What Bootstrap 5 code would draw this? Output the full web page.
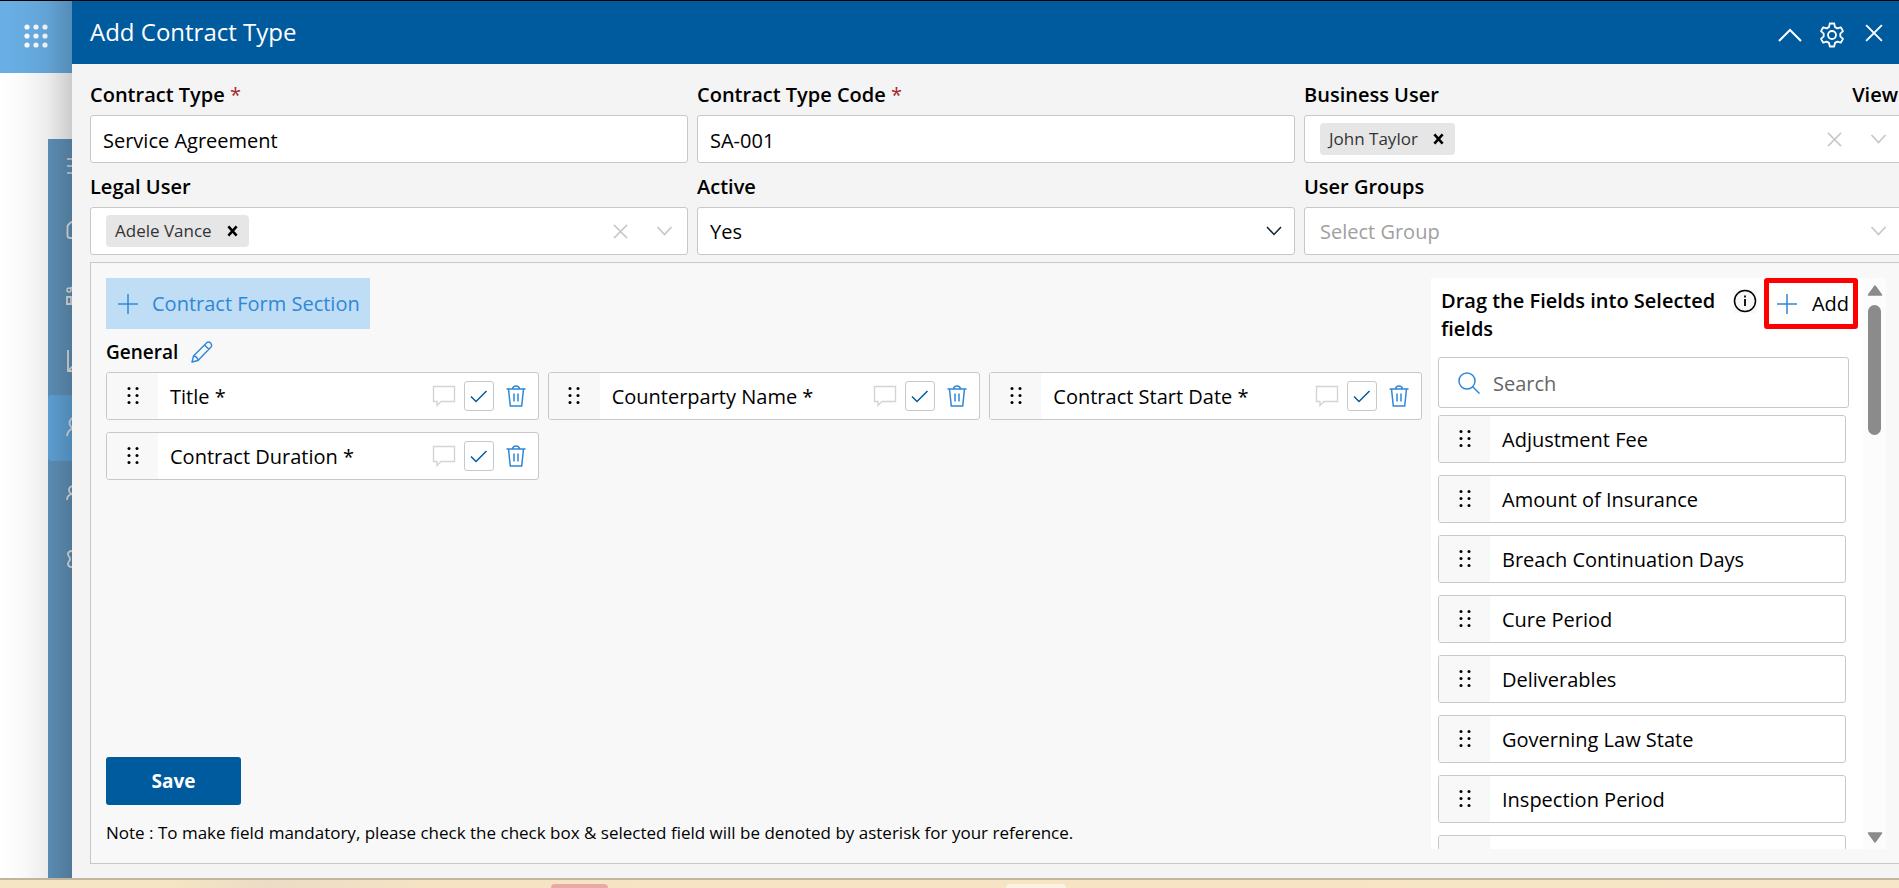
<!DOCTYPE html>
<html lang="en">
<head>
<meta charset="utf-8">
<meta name="viewport" content="width=device-width, initial-scale=1">
<title>Add Contract Type</title>
<link href="https://cdn.jsdelivr.net/npm/bootstrap@5.3.0/dist/css/bootstrap.min.css" rel="stylesheet">
<style>
  :root { --brand: #005a9e; --line: #c8c8c8; --accent: #2f87d8; }
  body { font-family: "Open Sans", "Noto Sans", sans-serif; font-size: 20px; line-height: 28px; color: #000; background: #fff; }
  svg { display: block; flex: none; fill: none; stroke: currentColor; }
  .screen { height: 100vh; min-height: 640px; border-top: 1px solid #000; overflow: hidden; }
  .shrinkable { min-width: 0; min-height: 0; }
  .rail { width: 72px; position: relative; overflow: hidden; }
  .rail::after { content: ""; position: absolute; inset: 0; background: linear-gradient(to right, rgba(0,0,0,0) 0, rgba(0,0,0,.02) 30%, rgba(0,0,0,.07) 65%, rgba(0,0,0,.2) 100%); pointer-events: none; }
  .launcher { height: 72px; background: #69afe5; color: #fff; border: 0; padding: 0 0 2px 24px; }
  .side-menu { width: 24px; margin-top: 66px; background: #6397c0; color: #ececec; overflow: hidden; }
  .side-menu a { display: flex; align-items: center; height: 66px; padding: 0 0 2px 18px; color: inherit; }
  .side-menu a.first { height: 58px; padding-bottom: 4px; }
  .side-menu a.current { background: #63aae2; border-radius: 4px 0 0 4px; }
  .panel-head { height: 63px; background: var(--brand); color: #fff; padding: 0 16px 0 18px; }
  .panel-head h1 { font-size: 24px; line-height: 32px; font-weight: 400; padding-bottom: 2px; }
  .icon-btn { background: none; border: 0; padding: 0; color: inherit; }
  .panel-body { background: #f4f4f4; padding: 17px 0 14px 18px; }
  .form-grid { display: grid; grid-template-columns: repeat(3, minmax(0, 1fr)); column-gap: 9px; row-gap: 10px; margin-right: -3px; }
  .form-grid label, .lbl { font-weight: 600; line-height: 28px; margin-bottom: 6px; display: block; white-space: nowrap; }
  .req { color: #a4262c; font-weight: 400; }
  .box { height: 48px; background-color: #fff; border: 1px solid var(--line); border-radius: 3px; color: #000; padding: 2px 12px 0; }
  select.box { appearance: none; background-image: url("data:image/svg+xml,%3Csvg xmlns='http://www.w3.org/2000/svg' viewBox='0 0 16 10'%3E%3Cpath d='M1 1l7 7.5L15 1' fill='none' stroke='%23123' stroke-width='1.5'/%3E%3C/svg%3E"); background-repeat: no-repeat; background-size: 16px 10px; background-position: right 12px center; }
  .picker { display: flex; align-items: center; padding: 0 14px 0 15px; color: #c8c8c8; }
  .picker input { border: 0; outline: 0; flex: 1; min-width: 0; background: none; padding: 2px 0 0; }
  .picker input::placeholder { color: #a0a0a0; opacity: 1; }
  .picked { background: #e6e6e6; color: #333; border-radius: 4px; height: 32px; padding: 0 11px 0 9px; font-size: 17px; gap: 15px; }
  .designer { background: #f8f8f8; border: 1px solid var(--line); border-right: 0; margin-top: 7px; padding: 15px 13px 14px 15px; gap: 9px; }
  .add-section { width: 264px; height: 51px; background: #bfddf5; color: var(--accent); border: 0; padding: 0 12px; gap: 14px; white-space: nowrap; }
  .section-bar { gap: 13px; margin: 9px 0 6px; }
  .section-name { font-size: 19px; line-height: 28px; font-weight: 600; margin: 0; }
  .pool-title { font-size: 20px; line-height: 28px; font-weight: 600; margin: 0; }
  .fields { display: grid; grid-template-columns: repeat(3, minmax(0, 1fr)); gap: 12px 9px; }
  .field { display: flex; align-items: center; height: 48px; flex: none; background: #fff; border: 1px solid var(--line); border-radius: 3px; overflow: hidden; white-space: nowrap; }
  .field label, .field-name { padding-top: 2px; }
  .grip { align-self: stretch; width: 51px; background: #f8f8f8; display: flex; align-items: center; justify-content: center; flex: none; margin-right: 12px; }
  .tools { gap: 8px; padding-right: 12px; color: var(--accent); }
  .tools .talk { color: #d4d4d4; }
  .tick { appearance: none; width: 30px; height: 30px; margin: 0 4px 0 0; border: 1px solid var(--line); border-radius: 3px; background: #fff; }
  .tick:checked { background: #fff url("data:image/svg+xml,%3Csvg xmlns='http://www.w3.org/2000/svg' viewBox='0 0 28 28'%3E%3Cpath d='M6 14.5l5 5L21.500 9' fill='none' stroke='%23005a9e' stroke-width='1.500'/%3E%3C/svg%3E") center/28px no-repeat; }
  .save { width: 135px; height: 48px; background: var(--brand); color: #fff; border: 0; border-radius: 3px; font-weight: 700; font-size: 19px; }
  .note { font-size: 17px; line-height: 24px; }
  .pool { width: 455px; }
  .pool-main { background: #fff; padding: 9px 14px 0 7px; overflow: hidden; }
  .pool-head { padding-left: 3px; margin-bottom: 14px; }
  .info { background: #f8f8f8; margin: 2px 7px 0 auto; }
  .add-btn { width: 94px; height: 51px; margin: -9px -9px 0 0; border: 5px solid #f00; border-radius: 3px; background: #fff; padding: 0 4px 0 8px; flex: none; }
  .search-box { display: flex; align-items: center; flex: none; height: 51px; padding: 0 20px 0 19px; gap: 13px; color: var(--accent); }
  .search-box input { border: 0; outline: 0; flex: 1; min-width: 0; padding: 2px 0 0; }
  .search-box input::placeholder { color: #666; opacity: 1; }
  .pool-list { display: flex; flex-direction: column; gap: 12px; margin: 7px 3px 0 0; padding: 0; list-style: none; }
  .scroll { width: 23px; background: #fcfcfc; padding: 7px 0 6px; color: #8b8b8b; }
  .thumb { width: 13px; height: 130px; border-radius: 7px; background: #8b8b8b; margin-top: 9px; }
  .desk { height: 10px; flex: none; border-top: 2px solid #c2b59c; background: linear-gradient(to right, #f5e5c4 0, #f5e5c4 9%, #ecdcc6 14%, #f5e3c4 22%, #f6e4c4 45%, #f7e6c7 100%); position: relative; }
  .desk span { position: absolute; bottom: 0; height: 4px; border-radius: 4px 4px 0 0; }
  .desk .red-tile { left: 29%; width: 57px; background: #e8aaa6; }
  .desk .pale-tile { left: 53%; width: 60px; background: #faf3e4; }
</style>
</head>
<body>
<svg width="0" height="0" class="position-absolute" aria-hidden="true">
  <symbol id="dots6" viewBox="0 0 14 18"><g fill="currentColor" stroke="none"><circle cx="3" cy="1.500" r="1.500"/><circle cx="11" cy="1.500" r="1.500"/><circle cx="3" cy="8.500" r="1.500"/><circle cx="11" cy="8.500" r="1.500"/><circle cx="3" cy="15.500" r="1.500"/><circle cx="11" cy="15.500" r="1.500"/></g></symbol>
  <symbol id="chat" viewBox="0 0 24 22"><path d="M1.500 1.500h21v15H9l-4 4v-4H1.500z" stroke-width="1.400"/></symbol>
  <symbol id="bin" viewBox="0 0 20 22"><path d="M.5 4h19M2.500 4l1.800 17h11.400l1.800-17M6.500 4C7 0 13 0 13.500 4M8 8.500v8M12 8.500v8" stroke-width="1.500"/></symbol>
  <symbol id="plus" viewBox="0 0 20 20"><path d="M10 0v20M0 10h20" stroke-width="1.500"/></symbol>
  <symbol id="cross" viewBox="0 0 16 16"><path d="M1 1l14 14M15 1L1 15" stroke-width="1.700"/></symbol>
  <symbol id="boldx" viewBox="0 0 12 12"><path d="M1.500 1l9 10M10.500 1l-9 10" stroke-width="2.800"/></symbol>
  <symbol id="down" viewBox="0 0 16 10"><path d="M1 1l7 7.500L15 1" stroke-width="1.800"/></symbol>
</svg>
<div class="screen d-flex flex-column">
  <div class="d-flex flex-grow-1 shrinkable">
    <aside class="rail d-flex flex-column flex-shrink-0">
      <button class="launcher" type="button" aria-label="App launcher">
        <svg width="24" height="24" viewBox="0 0 24 24"><g fill="currentColor" stroke="none"><circle cx="3" cy="3" r="2.600"/><circle cx="12" cy="3" r="2.600"/><circle cx="21" cy="3" r="2.600"/><circle cx="3" cy="12" r="2.600"/><circle cx="12" cy="12" r="2.600"/><circle cx="21" cy="12" r="2.600"/><circle cx="3" cy="21" r="2.600"/><circle cx="12" cy="21" r="2.600"/><circle cx="21" cy="21" r="2.600"/></g></svg>
      </button>
      <nav class="side-menu flex-grow-1 ms-auto" aria-label="Main">
        <a href="#" class="first" aria-label="Menu"><svg width="22" height="18" viewBox="0 0 22 18"><path d="M1 2h20M1 9h20M1 16h20" stroke-width="1.500"/></svg></a>
        <a href="#" aria-label="Home"><svg width="22" height="20" viewBox="0 0 22 20"><path d="M8 19H4q-2.500 0-2.500-2.500V8Q1.500 6 4 4l7-4" stroke-width="1.800"/></svg></a>
        <a href="#" aria-label="Dashboard"><svg width="22" height="22" viewBox="0 0 22 22"><path d="M1 13h4v7H1zM4 5l5-4M9 10h4v10H9z" stroke-width="1.800"/><circle cx="3" cy="6" r="2" stroke-width="1.500"/></svg></a>
        <a href="#" aria-label="Reports"><svg width="22" height="22" viewBox="0 0 22 22"><path d="M2 0v21h20M2 21l8-8" stroke-width="1.800"/></svg></a>
        <a href="#" class="current" aria-label="Contract types"><svg width="22" height="22" viewBox="0 0 22 22"><circle cx="9" cy="7" r="5.500" stroke-width="1.800"/><path d="M1 20q1-7 7-7.500" stroke-width="1.800"/></svg></a>
        <a href="#" aria-label="Users"><svg width="22" height="18" viewBox="0 0 22 18"><circle cx="7" cy="6" r="4" stroke-width="1.800"/><path d="M1 16q0-5.500 6-6" stroke-width="1.800"/></svg></a>
        <a href="#" aria-label="Settings"><svg width="20" height="20" viewBox="0 0 20 20"><path d="M8 3Q5 1 3 3 1 5 3 7.500q2 2.500 0 5Q1 15 3 17q2 2 5 0" stroke-width="1.800"/></svg></a>
      </nav>
    </aside>

    <main class="d-flex flex-column flex-grow-1 shrinkable">
      <header class="panel-head d-flex align-items-center flex-shrink-0">
        <h1 class="mb-0 me-auto">Add Contract Type</h1>
        <div class="d-flex align-items-center gap-3 me-3 pt-1">
          <button class="icon-btn" type="button" aria-label="Collapse"><svg width="26" height="14" viewBox="0 0 26 14"><path d="M2 13L13 2l11 11" stroke-width="2"/></svg></button>
          <button class="icon-btn" type="button" aria-label="Settings"><svg width="26" height="26" viewBox="0 0 26 26" stroke-width="1.800"><circle cx="13" cy="13" r="4"/><path d="M10.800 1.500h4.400l.8 3.600 2.300 1.300 3.500-1.100 2.200 3.800-2.700 2.500v2.800l2.700 2.500-2.200 3.800-3.500-1.100-2.300 1.300-.8 3.600h-4.400l-.8-3.600-2.300-1.300-3.500 1.100L2 16.900l2.700-2.500v-2.800L2 9.100l2.200-3.800 3.500 1.100L10 5.100z" stroke-linejoin="round"/></svg></button>
        </div>
        <button class="icon-btn ms-1" type="button" aria-label="Close"><svg width="18" height="18"><use href="#cross"/></svg></button>
      </header>

      <div class="panel-body d-flex flex-column flex-grow-1 overflow-hidden">
        <div class="form-grid">
          <div><label for="ctype">Contract Type <span class="req">*</span></label><input id="ctype" class="box w-100" value="Service Agreement"></div>
          <div><label for="ccode">Contract Type Code <span class="req">*</span></label><input id="ccode" class="box w-100" value="SA-001"></div>
          <div>
            <div class="d-flex justify-content-between"><label for="buser">Business User</label><span class="lbl me-1">View</span></div>
            <div class="box picker"><span class="picked d-flex align-items-center">John Taylor<button class="icon-btn text-black" type="button" aria-label="Remove John Taylor"><svg width="11" height="12"><use href="#boldx"/></svg></button></span><input id="buser"><svg width="15" height="15" class="me-4"><use href="#cross"/></svg><svg width="17" height="10" class="ms-1"><use href="#down"/></svg></div>
          </div>
          <div>
            <label for="luser">Legal User</label>
            <div class="box picker"><span class="picked d-flex align-items-center">Adele Vance<button class="icon-btn text-black" type="button" aria-label="Remove Adele Vance"><svg width="11" height="12"><use href="#boldx"/></svg></button></span><input id="luser"><svg width="15" height="15" class="me-4"><use href="#cross"/></svg><svg width="17" height="10" class="ms-1"><use href="#down"/></svg></div>
          </div>
          <div><label for="active">Active</label><select id="active" class="box w-100"><option>Yes</option><option>No</option></select></div>
          <div><label for="groups">User Groups</label><div class="box picker"><input id="groups" placeholder="Select Group"><svg width="17" height="10"><use href="#down"/></svg></div></div>
        </div>

        <section class="designer d-flex flex-grow-1 shrinkable">
          <div class="d-flex flex-column flex-grow-1 shrinkable pb-1">
            <button class="add-section d-flex align-items-center" type="button"><svg width="20" height="20"><use href="#plus"/></svg>Contract Form Section</button>
            <div class="section-bar d-flex align-items-center">
              <h2 class="section-name">General</h2>
              <button class="icon-btn" type="button" aria-label="Rename section"><svg width="22" height="22" viewBox="0 0 22 22" color="#2f87d8"><path d="M1 21l1.500-6L15.500 2q2-2 4 0t.500 4L7 19.500zM13.500 4l4.500 4.500M2.500 15q4 .5 4.500 4.500" stroke-width="1.400" stroke-linejoin="round"/></svg></button>
            </div>
            <div class="fields">
              <div class="field"><span class="grip"><svg width="14" height="18"><use href="#dots6"/></svg></span><label for="f1" class="me-auto">Title *</label><div class="tools d-flex align-items-center"><button class="icon-btn talk" type="button" aria-label="Comment"><svg width="24" height="22"><use href="#chat"/></svg></button><input type="checkbox" id="f1" class="tick" checked><button class="icon-btn" type="button" aria-label="Delete"><svg width="20" height="22"><use href="#bin"/></svg></button></div></div>
              <div class="field"><span class="grip"><svg width="14" height="18"><use href="#dots6"/></svg></span><label for="f2" class="me-auto">Counterparty Name *</label><div class="tools d-flex align-items-center"><button class="icon-btn talk" type="button" aria-label="Comment"><svg width="24" height="22"><use href="#chat"/></svg></button><input type="checkbox" id="f2" class="tick" checked><button class="icon-btn" type="button" aria-label="Delete"><svg width="20" height="22"><use href="#bin"/></svg></button></div></div>
              <div class="field"><span class="grip"><svg width="14" height="18"><use href="#dots6"/></svg></span><label for="f3" class="me-auto">Contract Start Date *</label><div class="tools d-flex align-items-center"><button class="icon-btn talk" type="button" aria-label="Comment"><svg width="24" height="22"><use href="#chat"/></svg></button><input type="checkbox" id="f3" class="tick" checked><button class="icon-btn" type="button" aria-label="Delete"><svg width="20" height="22"><use href="#bin"/></svg></button></div></div>
              <div class="field"><span class="grip"><svg width="14" height="18"><use href="#dots6"/></svg></span><label for="f4" class="me-auto">Contract Duration *</label><div class="tools d-flex align-items-center"><button class="icon-btn talk" type="button" aria-label="Comment"><svg width="24" height="22"><use href="#chat"/></svg></button><input type="checkbox" id="f4" class="tick" checked><button class="icon-btn" type="button" aria-label="Delete"><svg width="20" height="22"><use href="#bin"/></svg></button></div></div>
            </div>
            <div class="mt-auto"><button class="save" type="submit">Save</button><p class="note mb-0 mt-3">Note : To make field mandatory, please check the check box &amp; selected field will be denoted by asterisk for your reference.</p></div>
          </div>

          <aside class="pool d-flex flex-shrink-0">
            <div class="pool-main d-flex flex-column flex-grow-1 shrinkable">
              <div class="pool-head d-flex align-items-start flex-shrink-0">
                <h2 class="pool-title">Drag the Fields into Selected fields</h2>
                <button class="icon-btn info" type="button" aria-label="Information"><svg width="24" height="24" viewBox="0 0 24 24"><circle cx="12" cy="12" r="10.500" stroke-width="1.500"/><path d="M12 10v7M12 6.500v2" stroke-width="1.800"/></svg></button>
                <button class="add-btn d-flex align-items-center justify-content-between" type="button"><svg width="20" height="20" color="#2f87d8"><use href="#plus"/></svg>Add</button>
              </div>
              <div class="box search-box"><svg width="22" height="22" viewBox="0 0 22 22"><circle cx="9" cy="9" r="8" stroke-width="1.500"/><path d="M14.500 14.500l7 7" stroke-width="1.500"/></svg><input type="search" placeholder="Search" aria-label="Search fields"></div>
              <ul class="pool-list">
                <li class="field"><span class="grip"><svg width="14" height="18"><use href="#dots6"/></svg></span><span class="field-name">Adjustment Fee</span></li>
                <li class="field"><span class="grip"><svg width="14" height="18"><use href="#dots6"/></svg></span><span class="field-name">Amount of Insurance</span></li>
                <li class="field"><span class="grip"><svg width="14" height="18"><use href="#dots6"/></svg></span><span class="field-name">Breach Continuation Days</span></li>
                <li class="field"><span class="grip"><svg width="14" height="18"><use href="#dots6"/></svg></span><span class="field-name">Cure Period</span></li>
                <li class="field"><span class="grip"><svg width="14" height="18"><use href="#dots6"/></svg></span><span class="field-name">Deliverables</span></li>
                <li class="field"><span class="grip"><svg width="14" height="18"><use href="#dots6"/></svg></span><span class="field-name">Governing Law State</span></li>
                <li class="field"><span class="grip"><svg width="14" height="18"><use href="#dots6"/></svg></span><span class="field-name">Inspection Period</span></li>
                <li class="field"><span class="grip"></span></li>
              </ul>
            </div>
            <div class="scroll d-flex flex-column align-items-center flex-shrink-0">
              <svg width="16" height="11" viewBox="0 0 16 11"><path d="M8 1l6.500 9h-13z" fill="currentColor" stroke-width="1.500" stroke-linejoin="round"/></svg>
              <div class="thumb"></div>
              <svg class="mt-auto" width="16" height="11" viewBox="0 0 16 11"><path d="M8 10l6.500-9h-13z" fill="currentColor" stroke-width="1.500" stroke-linejoin="round"/></svg>
            </div>
          </aside>
        </section>
      </div>
    </main>
  </div>
  <footer class="desk"><span class="red-tile"></span><span class="pale-tile"></span></footer>
</div>
<script src="https://cdn.jsdelivr.net/npm/bootstrap@5.3.0/dist/js/bootstrap.bundle.min.js"></script>
</body>
</html>
